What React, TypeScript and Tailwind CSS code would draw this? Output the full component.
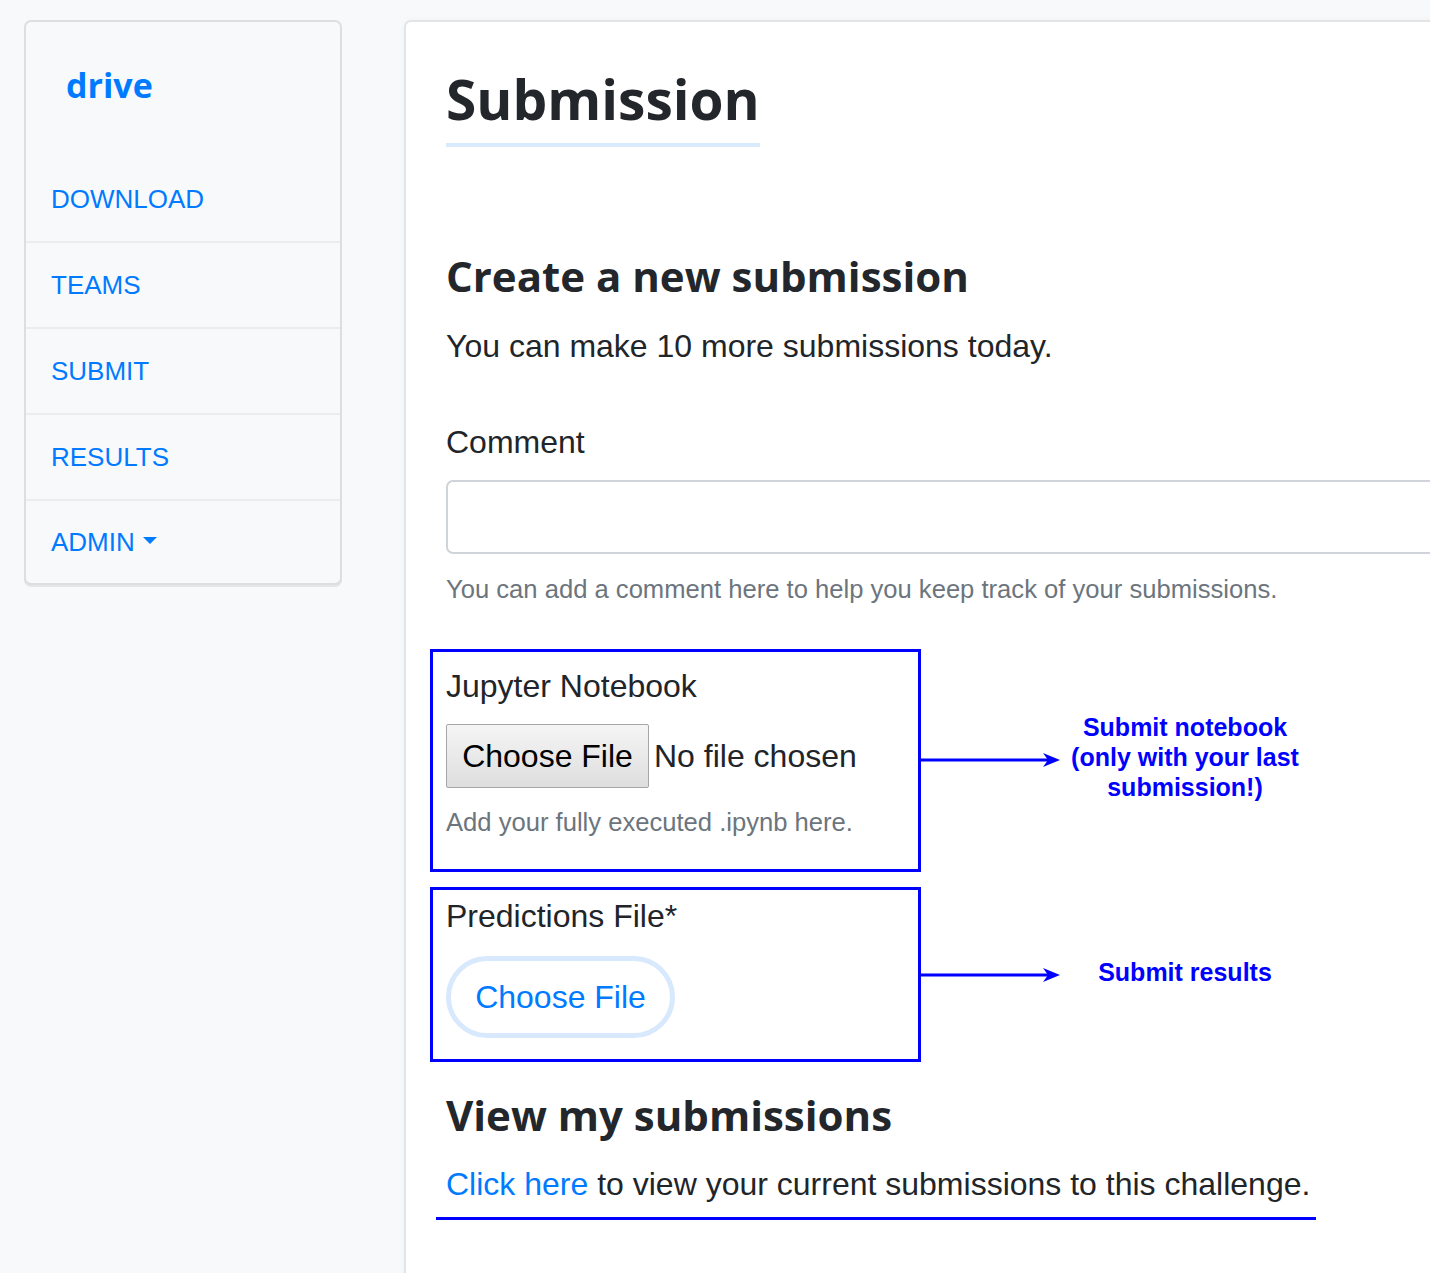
import React from "react";

const heading = { fontFamily: '"Open Sans", "Noto Sans", sans-serif' };

function Arrow() {
  return (
    <svg width="139" height="20" viewBox="0 0 139 20" className="shrink-0">
      <line x1="0" y1="10" x2="128" y2="10" stroke="#0000ff" strokeWidth="3" />
      <path d="M139 10 L122 3 L127 10 L122 17 Z" fill="#0000ff" />
    </svg>
  );
}

export default function App() {
  const nav = ["DOWNLOAD", "TEAMS", "SUBMIT", "RESULTS"];
  return (
    <div
      className="w-[1430px] h-[1273px] overflow-hidden bg-[#f8f9fa] flex items-start pt-[20px] pl-[24px] gap-[62px] text-[#212529]"
      style={{ fontFamily: '"Liberation Sans", Arial, sans-serif' }}
    >
      {/* Sidebar */}
      <aside className="w-[318px] shrink-0 bg-[#f8f9fa] border-2 border-[#dcdee0] rounded-[7px] shadow-[0_2px_0_#e4e6e8] flex flex-col">
        <div className="h-[135px] pt-[43px] pl-[40px]">
          <div
            className="text-[34px] leading-[1.2] font-bold text-[#007bff]"
            style={heading}
          >
            drive
          </div>
        </div>
        {nav.map((n) => (
          <div
            key={n}
            className="h-[86px] border-b-2 border-[#eaecee] flex items-center pl-[25px] text-[26px] text-[#007bff]"
          >
            {n}
          </div>
        ))}
        <div className="h-[82px] flex items-center pl-[25px] text-[26px] text-[#007bff]">
          ADMIN
          <svg width="14" height="8" viewBox="0 0 14 8" className="ml-[8px] mb-[2px]">
            <path d="M0 0 L14 0 L7 7 Z" fill="#007bff" />
          </svg>
        </div>
      </aside>

      {/* Main card */}
      <main className="w-[1100px] shrink-0 h-[1300px] bg-white border-2 border-[#e2e4e6] rounded-tl-[7px] shadow-[0_0_6px_rgba(0,0,0,0.04)] pl-[40px] pt-[44px]">
        <h1
          className="inline-block text-[55px] leading-[1.2] font-bold text-[#23272b] pb-[11px] border-b-4 border-[#d9eafc]"
          style={heading}
        >
          Submission
        </h1>

        <h2
          className="mt-[104px] text-[42px] leading-[1.2] font-bold text-[#23272b]"
          style={heading}
        >
          Create a new submission
        </h2>
        <p className="mt-[21px] text-[32px] leading-[1.5]">
          You can make 10 more submissions today.
        </p>

        <div className="mt-[48px] text-[32px] leading-[1.5]">Comment</div>
        <div className="mt-[14px] w-[1010px] h-[74px] border-2 border-[#ced4da] rounded-[7px] bg-white" />
        <p className="mt-[16px] text-[25.6px] leading-[1.5] text-[#6c757d]">
          You can add a comment here to help you keep track of your submissions.
        </p>

        {/* Notebook box */}
        <div className="mt-[40px] -ml-[16px] flex items-center">
          <div className="w-[491px] shrink-0 border-[3px] border-[#0000ff] pt-[10px] pl-[13px] pb-[28px]">
            <div className="text-[32px] leading-[1.5]">Jupyter Notebook</div>
            <div className="mt-[14px] flex items-center">
              <div className="w-[203px] h-[64px] border border-[#a6a6a6] rounded-[2px] bg-gradient-to-b from-[#f5f5f5] to-[#dedede] flex items-center justify-center text-[32px] text-black">
                Choose File
              </div>
              <span className="ml-[5px] text-[32px]">No file chosen</span>
            </div>
            <p className="mt-[15px] text-[25.6px] leading-[1.5] text-[#6c757d]">
              Add your fully executed .ipynb here.
            </p>
          </div>
          <Arrow />
          <div className="w-[250px] text-center text-[25px] leading-[30px] font-bold text-[#0000ff] -mt-[6px]">
            Submit notebook
            <br />
            (only with your last
            <br />
            submission!)
          </div>
        </div>

        {/* Predictions box */}
        <div className="mt-[15px] -ml-[16px] flex items-center">
          <div className="w-[491px] shrink-0 border-[3px] border-[#0000ff] pt-[2px] pl-[13px] pb-[21px]">
            <div className="text-[32px] leading-[1.5]">Predictions File*</div>
            <div className="mt-[16px] w-[229px] h-[82px] rounded-full border-[5px] border-[#d8e9fd] flex items-center justify-center text-[32px] text-[#007bff]">
              Choose File
            </div>
          </div>
          <Arrow />
          <div className="w-[250px] text-center text-[25px] leading-[30px] font-bold text-[#0000ff] -mt-[6px]">
            Submit results
          </div>
        </div>

        <h2
          className="mt-[28px] text-[42px] leading-[1.2] font-bold text-[#23272b]"
          style={heading}
        >
          View my submissions
        </h2>
        <p className="mt-[19px] text-[32px] leading-[1.5]">
          <span className="text-[#007bff]">Click here</span> to view your current
          submissions to this challenge.
        </p>
        <div className="mt-[9px] -ml-[10px] w-[880px] h-[3px] bg-[#0000ff]" />
      </main>
    </div>
  );
}
